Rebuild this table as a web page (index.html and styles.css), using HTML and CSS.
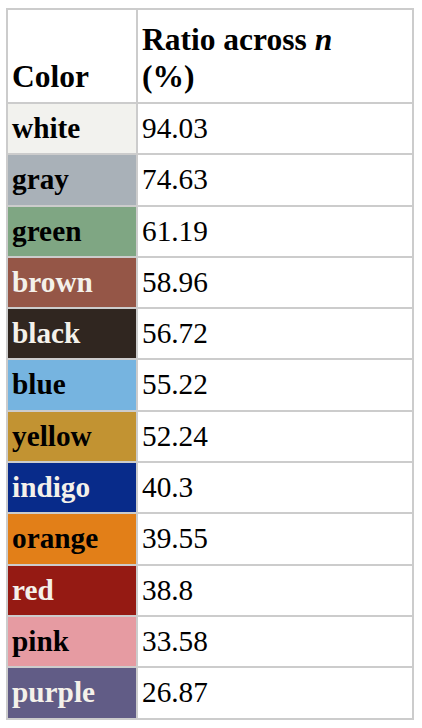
FILE: index.html
```html
<!DOCTYPE html>
<html>
<head>
<meta charset="utf-8">
<link rel="stylesheet" href="styles.css">
</head>
<body>
<table class="ratios">
  <colgroup><col class="c1"><col class="c2"></colgroup>
  <thead>
    <tr><th>Color</th><th>Ratio across <i>n</i><br>(%)</th></tr>
  </thead>
  <tbody>
    <tr><th class="sw white">white</th><td>94.03</td></tr>
    <tr><th class="sw gray">gray</th><td>74.63</td></tr>
    <tr><th class="sw green">green</th><td>61.19</td></tr>
    <tr><th class="sw brown">brown</th><td>58.96</td></tr>
    <tr><th class="sw black">black</th><td>56.72</td></tr>
    <tr><th class="sw blue">blue</th><td>55.22</td></tr>
    <tr><th class="sw yellow">yellow</th><td>52.24</td></tr>
    <tr><th class="sw indigo">indigo</th><td>40.3</td></tr>
    <tr><th class="sw orange">orange</th><td>39.55</td></tr>
    <tr><th class="sw red">red</th><td>38.8</td></tr>
    <tr><th class="sw pink">pink</th><td>33.58</td></tr>
    <tr><th class="sw purple">purple</th><td>26.87</td></tr>
  </tbody>
</table>
</body>
</html>
```
FILE: styles.css
```css
html, body { background: #fff; }
body {
  margin: 8px 8px 8px 6px;
  font-family: "Liberation Serif", "Times New Roman", serif;
  color: #000;
}
.ratios {
  border-collapse: separate;
  border-spacing: 0;
  border-top: 2px solid #cccccc;
  border-left: 2px solid #cccccc;
  table-layout: fixed;
  width: 408px;
}
.c1 { width: 130px; }
.c2 { width: 276px; }
.ratios th, .ratios td {
  border-right: 2px solid #cccccc;
  border-bottom: 2px solid #cccccc;
  padding: 8px 4px;
  text-align: left;
  font-size: 29.3px;
  line-height: 33.3px;
}
.ratios thead th {
  font-size: 31.5px;
  font-weight: bold;
  vertical-align: bottom;
  line-height: 37px;
  padding: 11px 4px 7px 4px;
}
.ratios td { font-weight: normal; }
.sw { font-weight: bold; }
.white { background: #f2f2ee; color: #000; }
.gray { background: #a9b1b8; color: #000; }
.green { background: #7fa683; color: #000; }
.brown { background: #955647; color: #f4f1ea; }
.black { background: #302620; color: #f4f1ea; }
.blue { background: #76b4e0; color: #000; }
.yellow { background: #c29332; color: #000; }
.indigo { background: #082b8a; color: #f4f1ea; }
.orange { background: #e27f18; color: #000; }
.red { background: #951a13; color: #f4f1ea; }
.pink { background: #e69ba2; color: #000; }
.purple { background: #615c86; color: #f4f1ea; }
```
